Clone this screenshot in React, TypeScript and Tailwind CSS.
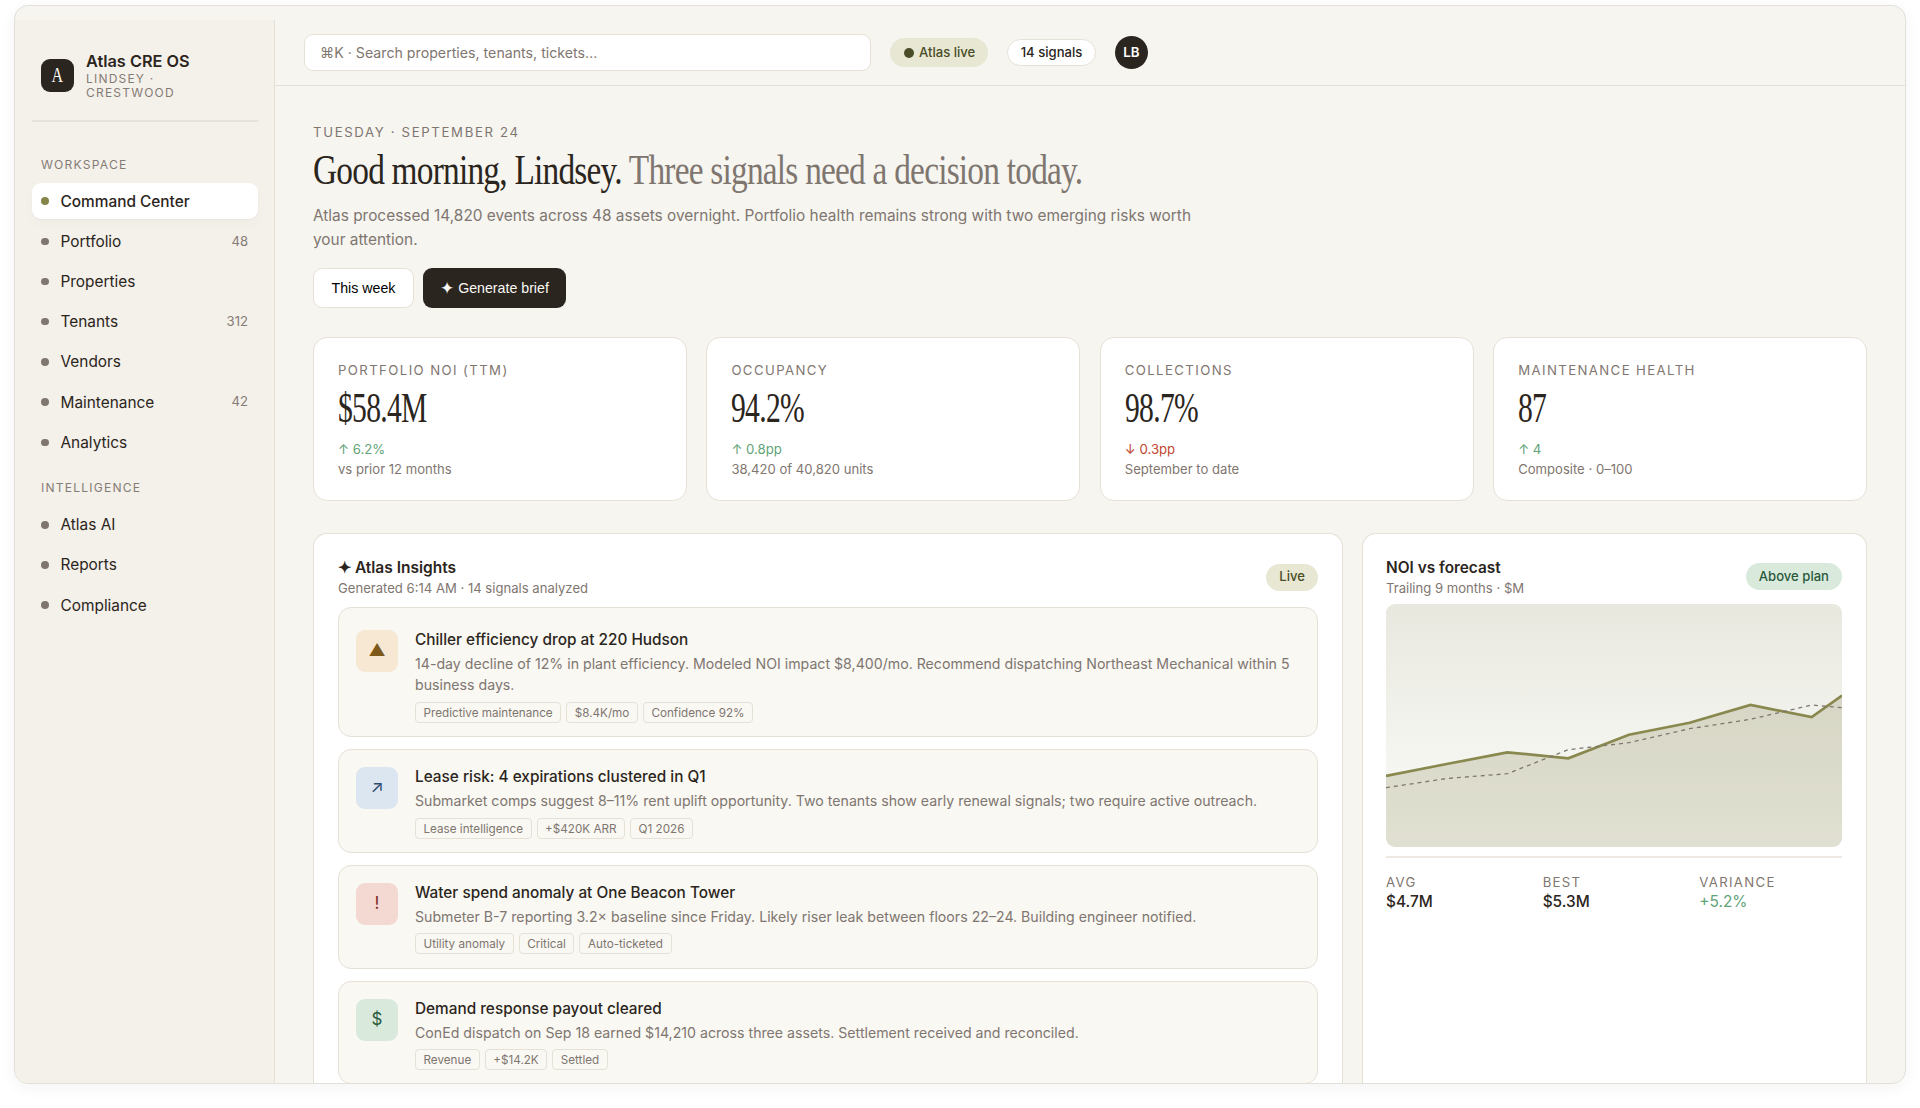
import React from "react";

type NavEntry = { label: string; count?: string; active?: boolean };

const workspace: NavEntry[] = [
  { label: "Command Center", active: true },
  { label: "Portfolio", count: "48" },
  { label: "Properties" },
  { label: "Tenants", count: "312" },
  { label: "Vendors" },
  { label: "Maintenance", count: "42" },
  { label: "Analytics" },
];

const intelligence: NavEntry[] = [
  { label: "Atlas AI" },
  { label: "Reports" },
  { label: "Compliance" },
];

const metrics = [
  { label: "PORTFOLIO NOI (TTM)", value: "$58.4M", delta: "↑ 6.2%", note: "vs prior 12 months" },
  { label: "OCCUPANCY", value: "94.2%", delta: "↑ 0.8pp", note: "38,420 of 40,820 units" },
  { label: "COLLECTIONS", value: "98.7%", delta: "↓ 0.3pp", note: "September to date", down: true },
  { label: "MAINTENANCE HEALTH", value: "87", delta: "↑ 4", note: "Composite · 0–100" },
];

const insights = [
  {
    icon: "▲",
    tone: "bg-[#f7e8d3] text-[#7d5a1a]",
    pad: "pt-[22px]",
    title: "Chiller efficiency drop at 220 Hudson",
    body: "14-day decline of 12% in plant efficiency. Modeled NOI impact $8,400/mo. Recommend dispatching Northeast Mechanical within 5 business days.",
    tags: ["Predictive maintenance", "$8.4K/mo", "Confidence 92%"],
  },
  {
    icon: "↗",
    tone: "bg-[#dce6f1] text-[#2c4a6e]",
    pad: "pt-[17px]",
    title: "Lease risk: 4 expirations clustered in Q1",
    body: "Submarket comps suggest 8–11% rent uplift opportunity. Two tenants show early renewal signals; two require active outreach.",
    tags: ["Lease intelligence", "+$420K ARR", "Q1 2026"],
  },
  {
    icon: "!",
    tone: "bg-[#f4d9d3] text-[#7e2a1e]",
    pad: "pt-[17px]",
    title: "Water spend anomaly at One Beacon Tower",
    body: "Submeter B-7 reporting 3.2× baseline since Friday. Likely riser leak between floors 22–24. Building engineer notified.",
    tags: ["Utility anomaly", "Critical", "Auto-ticketed"],
  },
  {
    icon: "$",
    tone: "bg-[#d9eadd] text-[#2a5a3c]",
    pad: "pt-[17px]",
    title: "Demand response payout cleared",
    body: "ConEd dispatch on Sep 18 earned $14,210 across three assets. Settlement received and reconciled.",
    tags: ["Revenue", "+$14.2K", "Settled"],
  },
];

const NavItem = ({ label, count, active }: NavEntry) => (
  <a
    className={
      active
        ? "flex items-center h-[35.5px] rounded-[9px] px-[9px] bg-white shadow-[0_1px_2px_rgba(40,35,30,0.04),0_6px_16px_rgba(40,35,30,0.02)] font-medium"
        : "flex items-center h-[35.5px] rounded-[9px] px-[9px]"
    }
  >
    <span
      className={
        active
          ? "size-[7.5px] rounded-full bg-[#85854a] mr-3"
          : "size-[7.5px] rounded-full bg-[#7f7670] mr-3"
      }
    />
    <span className="flex-1 text-[15.4px]">{label}</span>
    {count && <span className="text-[13.1px] text-[#857c76] mr-px">{count}</span>}
  </a>
);

const Sidebar = () => (
  <aside className="w-[260px] shrink-0 bg-[#f4f0ea] border-r border-[#e4e0d4] pl-[17px] pr-4">
    <div className="h-[102px] border-b-2 border-[#e6e2da] flex items-center pl-[9px] pt-[10px] mb-[33px]">
      <div className="size-[33px] rounded-[9px] bg-[#2b2520] text-[#faf9f4] flex items-center justify-center font-['Liberation_Serif',serif] text-[20px]">
        <span className="inline-block scale-x-[.8]">A</span>
      </div>
      <div className="ml-3 w-[120px] pt-[2px]">
        <div className="text-[16.3px] font-semibold leading-[18px]">Atlas CRE OS</div>
        <div className="mt-[2.4px] text-[12px] leading-[14px] tracking-[1.2px] text-[#857c76]">
          LINDSEY · CRESTWOOD
        </div>
      </div>
    </div>
    <h4 className="text-[12.1px] leading-[20px] tracking-[1.2px] text-[#857c76] pl-[9px] mb-[8.4px]">
      WORKSPACE
    </h4>
    <nav className="flex flex-col gap-[4.7px]">
      {workspace.map((item) => (
        <NavItem key={item.label} {...item} />
      ))}
    </nav>
    <h4 className="text-[12.1px] leading-[20px] tracking-[1.2px] text-[#857c76] pl-[9px] mt-[18.3px] mb-[8.7px]">
      INTELLIGENCE
    </h4>
    <nav className="flex flex-col gap-[4.7px]">
      {intelligence.map((item) => (
        <NavItem key={item.label} {...item} />
      ))}
    </nav>
  </aside>
);

const TopBar = () => (
  <header className="h-[66px] shrink-0 border-b border-[#e2e0d9] flex items-center pl-[29px]">
    <div className="w-[567px] h-[37px] rounded-[9px] border border-[#e6e1d6] bg-white flex items-center px-[15px] text-[14.2px] text-[#7f7670]">
      ⌘K · Search properties, tenants, tickets...
    </div>
    <div className="ml-[19px] w-[98px] h-[28.5px] rounded-full bg-[#e7e7d3] text-[#4a4d27] flex items-center pl-[14px] text-[13.1px] font-medium whitespace-nowrap">
      <span className="size-[10px] shrink-0 rounded-full bg-[#4a4d27] mr-[5px]" />
      Atlas live
    </div>
    <div className="ml-[19px] w-[89px] h-[27px] rounded-full border border-[#e6e1d6] bg-white flex items-center justify-center text-[13.1px] font-medium">
      14 signals
    </div>
    <div className="ml-[19px] size-[33px] rounded-full bg-[#2b2520] text-white flex items-center justify-center text-[13.3px] font-semibold">
      LB
    </div>
  </header>
);

const Intro = () => (
  <section>
    <p className="text-[13.2px] leading-[20px] tracking-[1.65px] text-[#7f7670]">
      TUESDAY · SEPTEMBER 24
    </p>
    <h1 className="font-['Liberation_Serif',serif] text-[43px] leading-[48px] mt-[4px] origin-left scale-x-[.776] whitespace-nowrap tracking-[-1px]">
      Good morning, Lindsey.{" "}
      <span className="text-[#7f7670]">Three signals need a decision today.</span>
    </h1>
    <p className="w-[890px] mt-[10px] text-[15.4px] leading-[24px] text-[#7f7670]">
      Atlas processed 14,820 events across 48 assets overnight. Portfolio health remains
      strong with two emerging risks worth your attention.
    </p>
    <div className="flex gap-[9px] mt-[16px] font-['Liberation_Sans',Arial,sans-serif] text-[14.2px]">
      <button className="w-[101px] h-[40px] pt-px rounded-[9px] border border-[#e6e1d6] bg-white text-black">
        This week
      </button>
      <button className="w-[143px] h-[40px] rounded-[9px] bg-[#2b2520] text-[#faf9f4] flex items-center justify-center gap-1">
        <span className="text-[17px] leading-none">✦</span>
        <span className="pt-px">Generate brief</span>
      </button>
    </div>
  </section>
);

const Metrics = () => (
  <section className="grid grid-cols-4 gap-[19.5px] mt-[29px]">
    {metrics.map((m) => (
      <div
        key={m.label}
        className="h-[164px] rounded-[14px] border border-[#e6e1d6] bg-white pl-[24px] pt-[22px]"
      >
        <p className="text-[13.2px] leading-[20px] tracking-[1.4px] text-[#7f7670]">{m.label}</p>
        <p className="font-['Liberation_Serif',serif] text-[42px] leading-[44px] mt-[6px] origin-left scale-x-[.705] whitespace-nowrap tracking-[-1px]">
          {m.value}
        </p>
        <p
          className={
            m.down
              ? "text-[13.2px] leading-[20px] mt-[9px] text-[#c2452f]"
              : "text-[13.2px] leading-[20px] mt-[9px] text-[#5fa377]"
          }
        >
          {m.delta}
        </p>
        <p className="text-[13.1px] leading-[20px] text-[#7f7670]">{m.note}</p>
      </div>
    ))}
  </section>
);

const Insights = () => (
  <section className="w-[1030px] rounded-t-[14px] border border-b-0 border-[#e6e1d6] bg-white px-[24px] pt-[23px]">
    <div className="flex items-center justify-between h-[41px] mb-[9px]">
      <div>
        <h2 className="text-[15.5px] leading-[20px] font-semibold">✦ Atlas Insights</h2>
        <p className="text-[13.1px] leading-[20px] text-[#7f7670]">
          Generated 6:14 AM · 14 signals analyzed
        </p>
      </div>
      <span className="h-[27px] px-[13px] mt-[-1px] rounded-full bg-[#e7e7d3] text-[#4a4d27] text-[13.1px] font-medium flex items-center">
        Live
      </span>
    </div>
    <div className="flex flex-col gap-[12px]">
      {insights.map((item) => (
        <div
          key={item.title}
          className={`flex rounded-[13px] border border-[#e6e1d6] bg-[#f9f8f3] px-[17px] pb-[13.3px] ${item.pad}`}
        >
          <div
            className={`size-[42px] shrink-0 rounded-[9px] flex items-center justify-center text-[17px] ${item.tone}`}
          >
            {item.icon}
          </div>
          <div className="ml-[17px] flex-1">
            <h3 className="text-[15.35px] leading-[20px] font-medium">{item.title}</h3>
            <p className="mt-[3px] text-[14.17px] leading-[21.4px] text-[#7f7670]">{item.body}</p>
            <div className="flex gap-[5px] mt-[6px]">
              {item.tags.map((tag) => (
                <span
                  key={tag}
                  className="h-[21px] px-[7.5px] rounded-[4px] border border-[#e6e1d6] text-[11.7px] leading-[20px] text-[#7f7670]"
                >
                  {tag}
                </span>
              ))}
            </div>
          </div>
        </div>
      ))}
    </div>
  </section>
);

const actual = "0,172 61,160 122,148.3 183.3,154.3 244.3,130.7 305.3,118.7 366.5,101 428,113 458.5,91.5";
const forecast = "0,183.7 61,174.5 122,169.7 183.3,145.7 244.3,138.7 305.3,124.7 366.5,115.3 428,101 458.5,103.7";

const Forecast = () => (
  <section className="flex-1 rounded-t-[14px] border border-b-0 border-[#e6e1d6] bg-white pl-[23px] pr-[24px] pt-[23px]">
    <div className="flex items-center justify-between h-[41px] mb-[6px]">
      <div>
        <h2 className="text-[15.4px] leading-[20px] font-semibold">NOI vs forecast</h2>
        <p className="text-[13.1px] leading-[20px] text-[#7f7670]">Trailing 9 months · $M</p>
      </div>
      <span className="h-[27px] px-[13px] mt-[-2px] rounded-full bg-[#d9eadd] text-[#2a5a3c] text-[13.1px] font-medium flex items-center">
        Above plan
      </span>
    </div>
    <div className="h-[243px] rounded-[9px] overflow-hidden bg-linear-to-b from-[#e8e8df] to-[#fcfdfa]">
      <svg viewBox="0 0 458.5 243" preserveAspectRatio="none" className="w-full h-full">
        <polygon points={`${actual} 458.5,243 0,243`} fill="#8a8552" fillOpacity=".24" />
        <polyline points={actual} fill="none" stroke="#89884f" strokeWidth="2.7" />
        <polyline
          points={forecast}
          fill="none"
          stroke="#7f7670"
          strokeWidth="1.3"
          strokeDasharray="4 4"
        />
      </svg>
    </div>
    <div className="grid grid-cols-3 gap-[14px] border-t-2 border-[#ede8e2] mt-[9px] pt-[14px]">
      <div>
        <p className="text-[13.2px] leading-[20px] tracking-[1.3px] text-[#7f7670]">AVG</p>
        <p className="text-[15.4px] leading-[20px] font-medium">$4.7M</p>
      </div>
      <div>
        <p className="text-[13.2px] leading-[20px] tracking-[1.3px] text-[#7f7670]">BEST</p>
        <p className="text-[15.4px] leading-[20px] font-medium">$5.3M</p>
      </div>
      <div>
        <p className="text-[13.2px] leading-[20px] tracking-[1.3px] text-[#7f7670]">VARIANCE</p>
        <p className="text-[15.4px] leading-[20px] text-[#5fa377]">+5.2%</p>
      </div>
    </div>
  </section>
);

const App = () => {
  return (
    <div className="h-[1108px] bg-white pt-[5px] pl-[14px] overflow-hidden font-['Inter',sans-serif] text-[#2b2520]">
      <div className="w-[1892px] h-[1079px] rounded-[14px] border border-[#e2e0d9] bg-[#f6f5f0] pt-[14px] overflow-hidden flex shadow-[0_4px_16px_rgba(40,35,30,0.05)]">
        <Sidebar />
        <div className="flex-1 min-w-0 flex flex-col">
          <TopBar />
          <main className="pl-[38px] pr-[38px] pt-[36px]">
            <Intro />
            <Metrics />
            <div className="flex gap-[19px] mt-[32px] h-[700px]">
              <Insights />
              <Forecast />
            </div>
          </main>
        </div>
      </div>
    </div>
  );
};

export default App;
